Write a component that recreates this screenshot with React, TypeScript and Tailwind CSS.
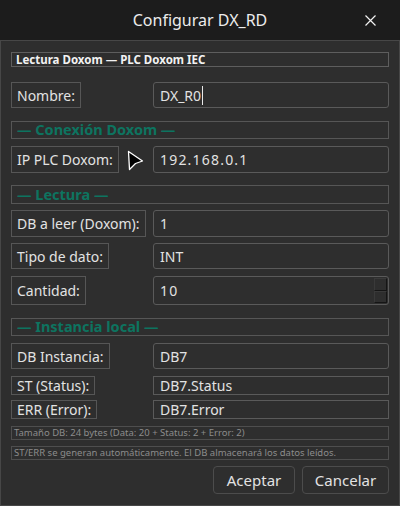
import React from "react";

const font = { fontFamily: '"Noto Sans", "Open Sans", sans-serif' };

function Label({ text, h }: { text: string; h: string }) {
  return (
    <div className="w-[142px] shrink-0 flex">
      <div className={`${h} border border-[#565656] px-[5px] flex items-center text-[14px] text-[#e2e2e2] whitespace-nowrap`}>
        {text}
      </div>
    </div>
  );
}

function Field({ value, h, square, caret, spin, wide }: { value: string; h: string; square?: boolean; caret?: boolean; spin?: boolean; wide?: boolean }) {
  return (
    <div
      className={`${h} flex-1 border border-[#5a5a5a] ${square ? "" : "rounded-[3px]"} flex items-center pl-[6px] text-[14px] text-[#e2e2e2] relative`}
    >
      <span className={wide ? "tracking-[1.2px]" : ""}>{value}</span>
      {caret && <span className="inline-block w-px h-[19px] bg-[#e8e8e8] ml-[1px]" />}
      {spin && (
        <div className="absolute right-[1px] top-[1px] bottom-[1px] w-[13px] flex flex-col">
          <div className="flex-1 border-r border-b border-r-[#151515] border-b-[#151515] border-l border-t border-l-[#3a3a3a] border-t-[#3a3a3a]" />
          <div className="flex-1 border-r border-b border-r-[#151515] border-b-[#151515] border-l border-t border-l-[#3a3a3a] border-t-[#3a3a3a]" />
        </div>
      )}
    </div>
  );
}

function Section({ text, mt, h }: { text: string; mt: string; h: string }) {
  return (
    <div className={`${mt} ${h} border border-[#565656] flex items-center pl-[5px] text-[14.5px] font-bold text-[#0d7460]`}>
      {text}
    </div>
  );
}

export default function App() {
  return (
    <div className="w-[400px] h-[506px] bg-[#1c1c1c] flex flex-col overflow-hidden" style={font}>
      <div className="h-[40px] shrink-0 flex items-center justify-center relative text-[16px] text-[#ececec]">
        Configurar DX_RD
        <svg className="absolute left-[365px] top-[15px]" width="11" height="11" viewBox="0 0 11 11">
          <path d="M0.5 0.5 L10.5 10.5 M10.5 0.5 L0.5 10.5" stroke="#f2f2f2" strokeWidth="1.2" />
        </svg>
      </div>
      <div className="flex-1 border border-[#474747] bg-[#2e2e2e] pl-[10px] pr-[10px] pt-[11px] flex flex-col">
        <div className="h-[15px] border border-[#5e5e5e] flex items-center pl-[4px] text-[11.5px] font-bold text-[#f2f2f2] leading-none">
          Lectura Doxom — PLC Doxom IEC
        </div>

        <div className="mt-[15px] flex">
          <Label text="Nombre:" h="h-[26px]" />
          <Field value="DX_R0" h="h-[26px]" caret />
        </div>

        <Section text="— Conexión Doxom —" mt="mt-[13px]" h="h-[18px]" />

        <div className="mt-[7px] flex relative">
          <Label text="IP PLC Doxom:" h="h-[27px]" />
          <Field value="192.168.0.1" h="h-[27px]" wide />
          <svg className="absolute left-[116px] top-[4px]" width="17" height="21" viewBox="0 0 17 21">
            <path d="M1.5 1.5 L15.5 11 L8.5 13.5 L2.5 19.5 Z" fill="#000" stroke="#fff" strokeWidth="1.3" strokeLinejoin="round" />
          </svg>
        </div>

        <Section text="— Lectura —" mt="mt-[12px]" h="h-[19px]" />

        <div className="mt-[6px] flex">
          <Label text="DB a leer (Doxom):" h="h-[27px]" />
          <Field value="1" h="h-[27px]" />
        </div>
        <div className="mt-[6px] flex">
          <Label text="Tipo de dato:" h="h-[26px]" />
          <Field value="INT" h="h-[26px]" />
        </div>
        <div className="mt-[7px] flex">
          <Label text="Cantidad:" h="h-[29px]" />
          <Field value="10" h="h-[29px]" spin wide />
        </div>

        <Section text="— Instancia local —" mt="mt-[13px]" h="h-[18px]" />

        <div className="mt-[7px] flex">
          <Label text="DB Instancia:" h="h-[26px]" />
          <Field value="DB7" h="h-[26px]" />
        </div>
        <div className="mt-[7px] flex">
          <Label text="ST (Status):" h="h-[19px]" />
          <Field value="DB7.Status" h="h-[19px]" square />
        </div>
        <div className="mt-[5px] flex">
          <Label text="ERR (Error):" h="h-[19px]" />
          <Field value="DB7.Error" h="h-[19px]" square />
        </div>

        <div className="mt-[7px] h-[14px] border border-[#4e4e4e] flex items-center pl-[2px] text-[9.5px] text-[#8c8c8c] whitespace-nowrap">
          Tamaño DB: 24 bytes (Data: 20 + Status: 2 + Error: 2)
        </div>
        <div className="mt-[6px] h-[14px] border border-[#4e4e4e] flex items-center pl-[2px] text-[9.5px] text-[#8c8c8c] whitespace-nowrap">
          ST/ERR se generan automáticamente. El DB almacenará los datos leídos.
        </div>

        <div className="mt-[6px] flex justify-end gap-[7px]">
          <button className="w-[82px] h-[28px] border border-[#4c4c4c] rounded-[4px] text-[15px] text-[#e2e2e2]">Aceptar</button>
          <button className="w-[87px] h-[28px] border border-[#4c4c4c] rounded-[4px] text-[15px] text-[#e2e2e2]">Cancelar</button>
        </div>
      </div>
    </div>
  );
}
